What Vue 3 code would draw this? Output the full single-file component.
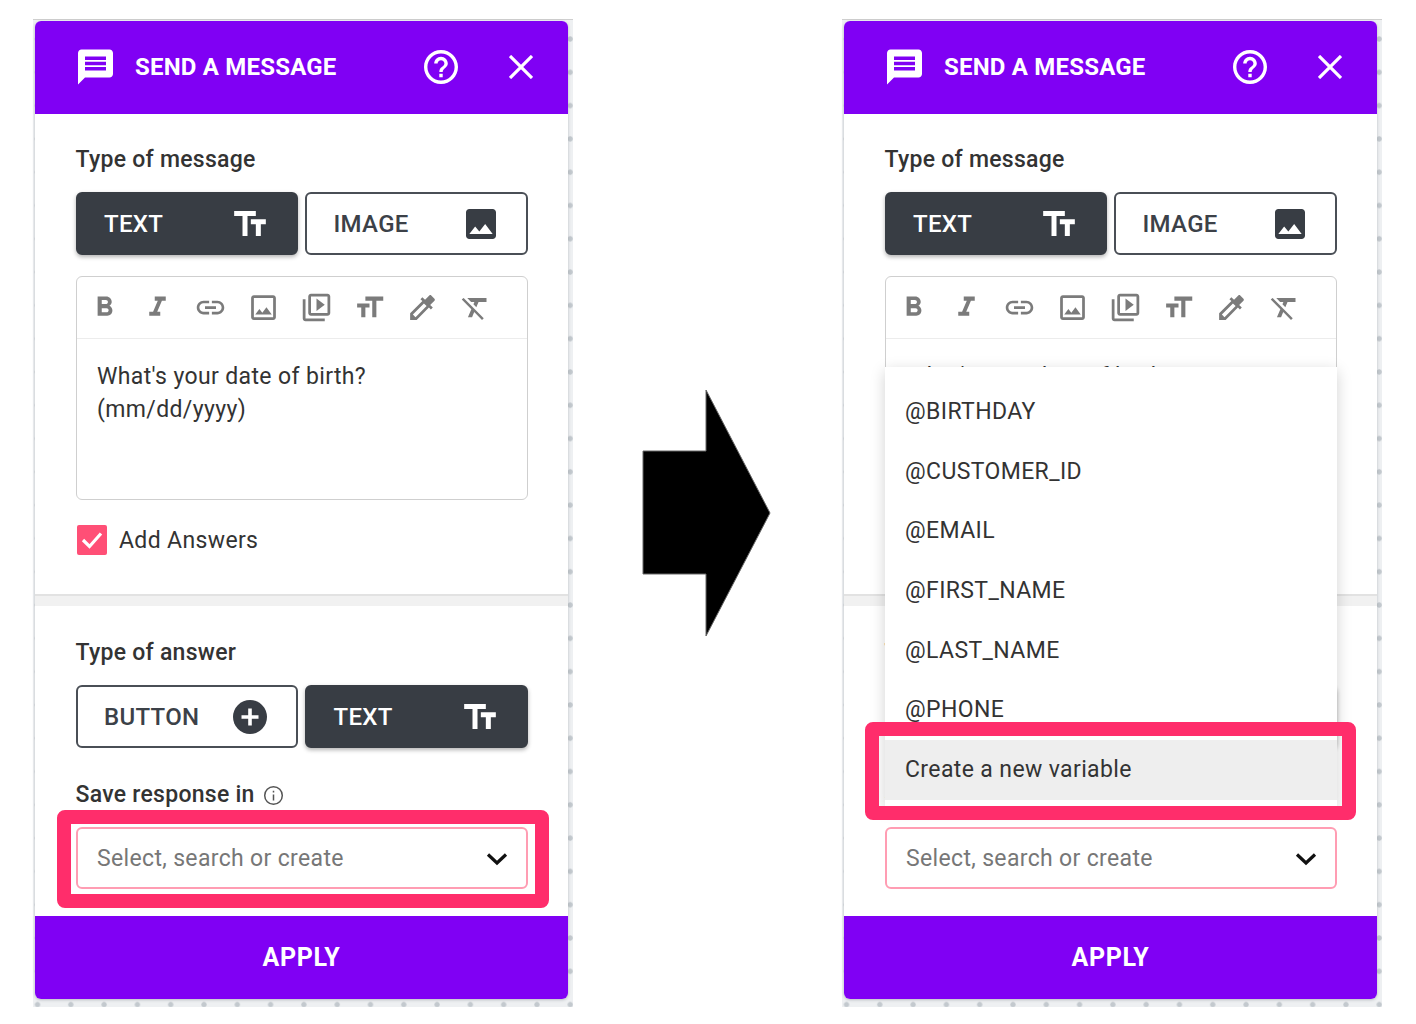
<script setup>
const paths = {
  bold: "M15.6 10.79c.97-.67 1.65-1.77 1.65-2.79 0-2.26-1.75-4-4-4H7v14h7.04c2.09 0 3.71-1.7 3.71-3.79 0-1.52-.86-2.82-2.15-3.42zM10 6.5h3c.83 0 1.5.67 1.5 1.5s-.67 1.5-1.5 1.5h-3v-3zm3.5 9H10v-3h3.5c.83 0 1.5.67 1.5 1.5s-.67 1.5-1.5 1.5z",
  italic: "M10 4v3h2.21l-3.42 8H6v3h8v-3h-2.21l3.42-8H18V4z",
  link: "M3.9 12c0-1.71 1.39-3.1 3.1-3.1h4V7H7c-2.76 0-5 2.24-5 5s2.24 5 5 5h4v-1.9H7c-1.71 0-3.1-1.39-3.1-3.1zM8 13h8v-2H8v2zm9-6h-4v1.9h4c1.71 0 3.1 1.39 3.1 3.1s-1.39 3.1-3.1 3.1h-4V17h4c2.76 0 5-2.24 5-5s-2.24-5-5-5z",
  image: "M19 5v14H5V5h14m0-2H5c-1.1 0-2 .9-2 2v14c0 1.1.9 2 2 2h14c1.1 0 2-.9 2-2V5c0-1.1-.9-2-2-2zm-4.86 8.86l-3 3.87L9 13.14 6 17h12l-3.86-5.14z",
  video: "M4 6H2v14c0 1.1.9 2 2 2h14v-2H4V6zm16-4H8c-1.1 0-2 .9-2 2v12c0 1.1.9 2 2 2h12c1.1 0 2-.9 2-2V4c0-1.1-.9-2-2-2zm0 14H8V4h12v12zM12 5.5v9l6-4.5z",
  size: "M9 4v3h5v12h3V7h5V4H9zm-6 8h3v7h3v-7h3V9H3v3z",
  color: "M20.71 5.63l-2.34-2.34c-.39-.39-1.02-.39-1.41 0l-3.12 3.12-1.93-1.91-1.41 1.41 1.42 1.42L3 16.25V21h4.75l8.92-8.92 1.42 1.42 1.41-1.41-1.92-1.92 3.12-3.12c.4-.4.4-1.03.01-1.42zM6.92 19L5 17.08l8.06-8.06 1.92 1.92L6.92 19z",
  clear: "M3.27 5L2 6.27l6.97 6.97L6.5 19h3l1.57-3.66L16.73 21 18 19.73 3.55 5.27 3.27 5zM6 5v.18L8.82 8h2.4l-.72 1.68 2.1 2.1L14.21 8H20V5H6z",
};
const textFields = "M2.5 4v3h5v12h3V7h5V4h-13zm19 5h-9v3h3v7h3v-7h3V9z";
const tools = Object.keys(paths);
const variables = ["@BIRTHDAY", "@CUSTOMER_ID", "@EMAIL", "@FIRST_NAME", "@LAST_NAME", "@PHONE"];
const panels = [
  { id: 1, open: false },
  { id: 2, open: true },
];
</script>

<template>
  <div class="page">
    <template v-for="(panel, i) in panels" :key="panel.id">
      <div class="arrow" v-if="i === 1">
        <svg width="130" height="250" viewBox="0 0 130 250">
          <path d="M65 2V63H2V186H65V248L129 125z" fill="#000" stroke="#666" stroke-width="1" />
        </svg>
      </div>
      <div class="panel-wrap">
        <div class="panel">
          <header class="head">
            <svg class="head-icon" width="35" height="36" viewBox="2 2 20 20" fill="#fff">
              <path d="M20 2H4c-1.1 0-1.99.9-1.99 2L2 22l4-4h14c1.1 0 2-.9 2-2V4c0-1.1-.9-2-2-2zm-2 12H6v-2h12v2zm0-3H6V9h12v2zm0-3H6V6h12v2z" />
            </svg>
            <h1>SEND A MESSAGE</h1>
            <svg class="help" width="34" height="34" viewBox="2 2 20 20" fill="#fff">
              <path d="M11 18h2v-2h-2v2zm1-16C6.48 2 2 6.48 2 12s4.48 10 10 10 10-4.48 10-10S17.52 2 12 2zm0 18c-4.41 0-8-3.59-8-8s3.59-8 8-8 8 3.59 8 8-3.59 8-8 8zm0-14c-2.21 0-4 1.79-4 4h2c0-1.1.9-2 2-2s2 .9 2 2c0 2-3 1.75-3 5h2c0-2.25 3-2.5 3-5 0-2.21-1.79-4-4-4z" />
            </svg>
            <svg class="close" width="24" height="24" viewBox="0 0 24 24" stroke="#fff" stroke-width="3.2">
              <path d="M1 1L23 23M23 1L1 23" />
            </svg>
          </header>

          <section class="block first">
            <div class="label">Type of message</div>
            <div class="switch">
              <div class="choice on">
                <span>TEXT</span>
                <svg width="32" height="25" viewBox="2.5 4 19 15" fill="#fff"><path :d="textFields" /></svg>
              </div>
              <div class="choice">
                <span>IMAGE</span>
                <svg width="30" height="30" viewBox="3 3 18 18" fill="#383d44">
                  <path d="M21 19V5c0-1.1-.9-2-2-2H5c-1.1 0-2 .9-2 2v14c0 1.1.9 2 2 2h14c1.1 0 2-.9 2-2zM8.5 13.5l2.5 3.01L14.5 12l4.5 6H5l3.5-4.5z" />
                </svg>
              </div>
            </div>

            <div class="editor">
              <div class="toolbar">
                <svg v-for="tool in tools" :key="tool" width="33" height="33" viewBox="0 0 24 24" fill="#7b7b7b">
                  <path :d="paths[tool]" />
                </svg>
              </div>
              <div class="editor-text">What's your date of birth?<br />(mm/dd/yyyy)</div>
            </div>

            <div class="check-row">
              <span class="check">
                <svg width="24" height="20" viewBox="0 0 24 20" fill="none" stroke="#fff" stroke-width="3.2">
                  <path d="M3 10L9.5 16.5L21 3.5" />
                </svg>
              </span>
              Add Answers
            </div>
          </section>

          <div class="band"></div>

          <section class="block second">
            <div class="label">Type of answer</div>
            <div class="switch">
              <div class="choice">
                <span>BUTTON</span>
                <svg class="plus" width="34" height="34" viewBox="0 0 34 34">
                  <circle cx="17" cy="17" r="17" fill="#383d44" />
                  <path d="M17 8.5V25.5M8.5 17H25.5" stroke="#fff" stroke-width="3.6" />
                </svg>
              </div>
              <div class="choice on">
                <span>TEXT</span>
                <svg width="32" height="25" viewBox="2.5 4 19 15" fill="#fff"><path :d="textFields" /></svg>
              </div>
            </div>
            <div class="label save">
              Save response in
              <svg width="21" height="21" viewBox="0 0 21 21" fill="none" stroke="#555" stroke-width="1.5">
                <circle cx="10.5" cy="10.5" r="8.8" />
                <path d="M10.5 9.5V15.5M10.5 5.8V7.6" />
              </svg>
            </div>
            <div class="select">
              <span>Select, search or create</span>
              <svg width="22" height="14" viewBox="0 0 22 14" fill="none" stroke="#111" stroke-width="3.2">
                <path d="M2 2.5L11 11L20 2.5" />
              </svg>
            </div>
          </section>

          <footer class="apply">APPLY</footer>

          <ul class="menu" v-if="panel.open">
            <li v-for="name in variables" :key="name">{{ name }}</li>
            <li class="current">Create a new variable</li>
          </ul>
          <div class="mark" :class="panel.open ? 'mark-menu' : 'mark-select'"></div>
        </div>
      </div>
    </template>
  </div>
</template>

<style>
html,
body {
  background: #fff;
}
</style>

<style scoped>
.page {
  display: flex;
  width: 1416px;
  height: 1024px;
  box-sizing: border-box;
  padding: 21px 0 25px 35px;
  font-family: Roboto, "Liberation Sans", sans-serif;
  color: #333;
  overflow: hidden;
}

.panel-wrap {
  position: relative;
  width: 533px;
  flex: none;
}

/* dotted canvas peeking out round the panel */
.panel-wrap::before {
  content: "";
  position: absolute;
  top: -2px;
  right: -5px;
  bottom: -8px;
  left: -2px;
  background-color: #eef0f2;
  background-image: radial-gradient(circle, #c3c9ce 2.3px, transparent 3px);
  background-size: 33.3px 33.3px;
  background-position: -12.15px 2.35px;
  border-top: 1px solid #cfcfcf;
}

.panel {
  position: relative;
  display: flex;
  flex-direction: column;
  height: 100%;
  background: #fff;
  border-radius: 6px;
  box-shadow: 0 1px 3px rgba(60, 70, 80, 0.3);
}

.head {
  display: flex;
  align-items: center;
  height: 93px;
  flex: none;
  padding: 0 35px 2px 43px;
  box-sizing: border-box;
  background: #8000f4;
  border-radius: 6px 6px 0 0;
  color: #fff;
}

.head h1 {
  margin: 0 0 0 22px;
  font-size: 24px;
  font-weight: 700;
  letter-spacing: 0.2px;
  line-height: 30px;
}

.help {
  margin-left: auto;
}

.close {
  margin-left: 51px;
}

.block {
  padding: 0 40.5px;
}

.block.first {
  padding-top: 31px;
  padding-bottom: 39px;
}

.block.second {
  padding-top: 32px;
  flex: 1;
}

.label {
  height: 30px;
  margin-bottom: 17px;
  font-size: 23px;
  font-weight: 500;
  letter-spacing: 0.27px;
  line-height: 30px;
}

.label.save {
  display: flex;
  align-items: center;
  gap: 8px;
  margin-top: 32px;
}

.switch {
  display: flex;
  gap: 7px;
}

.choice {
  display: flex;
  align-items: center;
  justify-content: space-between;
  flex: 1;
  height: 63px;
  box-sizing: border-box;
  padding: 0 30px 0 26.5px;
  border: 2px solid #4a4f56;
  border-radius: 6px;
  font-size: 24px;
  font-weight: 500;
  letter-spacing: 0.3px;
  color: #3c4148;
}

.choice.on {
  background: #383d44;
  border-color: #383d44;
  color: #fff;
  box-shadow: 0 2px 4px rgba(0, 0, 0, 0.3);
}

.plus {
  margin-right: -1px;
}

.editor {
  height: 224px;
  margin-top: 21px;
  box-sizing: border-box;
  border: 1.5px solid #cfcfcf;
  border-radius: 6px;
  font-size: 23px;
  letter-spacing: 0.37px;
}

.toolbar {
  display: flex;
  align-items: center;
  gap: 20px;
  height: 62px;
  box-sizing: border-box;
  padding: 0 0 1px 11px;
  border-bottom: 1.5px solid #ececec;
}

.editor-text {
  padding: 21px 20.5px 0;
  line-height: 33px;
}

.check-row {
  display: flex;
  align-items: center;
  gap: 12px;
  height: 30px;
  margin-top: 25px;
  padding-left: 1.5px;
  font-size: 23px;
  letter-spacing: 0.36px;
}

.check {
  display: flex;
  align-items: center;
  justify-content: center;
  width: 30px;
  height: 30px;
  background: #ff4f76;
  border-radius: 2px;
}

.band {
  flex: none;
  height: 12px;
  box-sizing: border-box;
  background: #f1f1f1;
  border-top: 2px solid #e2e2e2;
}

.select {
  display: flex;
  align-items: center;
  justify-content: space-between;
  height: 62px;
  box-sizing: border-box;
  padding: 0 18px 0 19.5px;
  border: 2px solid #ff9db3;
  border-radius: 6px;
  font-size: 23px;
  letter-spacing: 0.34px;
  color: #777;
}

.select svg {
  margin-top: 2px;
}

.apply {
  flex: none;
  height: 83px;
  background: #8000f4;
  border-radius: 0 0 6px 6px;
  color: #fff;
  font-size: 25px;
  font-weight: 700;
  letter-spacing: 0.6px;
  line-height: 83px;
  text-align: center;
}

.arrow {
  display: flex;
  justify-content: center;
  align-items: center;
  flex: none;
  width: 276px;
  margin-top: 5px;
}

.menu {
  position: absolute;
  top: 346px;
  left: 41px;
  width: 452px;
  margin: 0;
  padding: 15px 0 6px;
  list-style: none;
  background: #fff;
  box-shadow: 0 4px 14px rgba(0, 0, 0, 0.18);
  font-size: 23px;
  letter-spacing: 0.38px;
}

.menu li {
  height: 59.7px;
  padding-left: 20px;
  line-height: 59.7px;
}

.menu li.current {
  background: #eee;
}

.mark {
  position: absolute;
  box-sizing: border-box;
  border: 14px solid #ff2d6b;
  border-radius: 8px;
}

.mark-select {
  top: 789px;
  left: 22px;
  width: 492px;
  height: 98px;
}

.mark-menu {
  top: 701px;
  left: 21px;
  width: 491px;
  height: 98px;
}
</style>
